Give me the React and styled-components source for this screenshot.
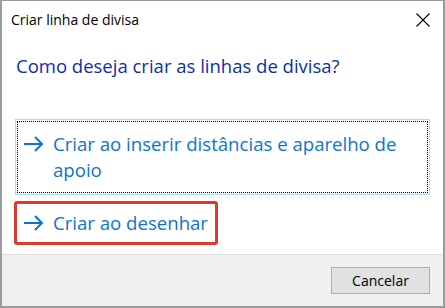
import React from "react";
import styled, { createGlobalStyle } from "styled-components";

const Global = createGlobalStyle`
  html, body { margin: 0; padding: 0; background: #fff; }
  * { box-sizing: border-box; }
`;

const FONT = `"Open Sans", "Noto Sans", "Liberation Sans", sans-serif`;

const Window = styled.div`
  width: 445px;
  height: 308px;
  border: 2px solid #9b9b9b;
  border-top-width: 1px;
  background: #fff;
  display: flex;
  flex-direction: column;
  font-family: ${FONT};
`;

const TitleBar = styled.div`
  height: 38px;
  flex: none;
  display: flex;
  align-items: center;
  justify-content: space-between;
  padding: 0 13px 0 9px;
`;

const Title = styled.div`
  font-size: 14px;
  color: #000;
  line-height: 20px;
`;

const CloseBtn = styled.div`
  width: 14px;
  height: 14px;
  display: flex;
  align-items: center;
  justify-content: center;
`;

const Body = styled.div`
  flex: 1;
  padding: 16px 13px 0 13px;
  display: flex;
  flex-direction: column;
`;

const Heading = styled.div`
  font-size: 18.5px;
  line-height: 22px;
  color: #0a2fae;
  margin-bottom: 42px;
  padding-left: 1px;
`;

const Links = styled.div`
  display: flex;
  flex-direction: column;
  align-items: flex-start;
  gap: 6px;
`;

const LinkOuter = styled.div`
  align-self: ${(p) => (p.$full ? "stretch" : "flex-start")};
  border: ${(p) => (p.$highlight ? "3px solid #e0392b" : "1px solid #aedaf5")};
  border-radius: ${(p) => (p.$highlight ? "3px" : "0")};
  margin-left: ${(p) => (p.$highlight ? "-1px" : "0")};
  padding: ${(p) => (p.$highlight ? "0" : "1px")};
`;

const LinkInner = styled.div`
  border: 1px ${(p) => (p.$focus ? "dotted #000" : "solid transparent")};
  display: flex;
  align-items: flex-start;
  padding: ${(p) => p.$pad};
  gap: 9px;
  color: #0a74d6;
  font-size: 18.6px;
  line-height: 26px;
`;

const ArrowWrap = styled.div`
  height: 26px;
  display: flex;
  align-items: center;
  flex: none;
`;

const LinkText = styled.div`
  flex: 1;
  padding-right: ${(p) => p.$endPad || "0"};
`;

const Footer = styled.div`
  height: 52px;
  flex: none;
  border-top: 1px solid #dfdfdf;
  background: #f0f0f0;
  display: flex;
  justify-content: flex-end;
  align-items: flex-start;
  padding: 12px 13px 0 0;
`;

const Button = styled.div`
  width: 99px;
  height: 27px;
  border: 1px solid #adadad;
  background: #e1e1e1;
  display: flex;
  align-items: center;
  justify-content: center;
  font-size: 14px;
  color: #000;
`;

const Arrow = () => (
  <svg width="20" height="16" viewBox="0 0 20 16" fill="none" stroke="#0a74d6" strokeWidth="2">
    <path d="M0 8 H18" />
    <path d="M11 1 L18 8 L11 15" />
  </svg>
);

const CloseIcon = () => (
  <svg width="14" height="14" viewBox="0 0 14 14" stroke="#000" strokeWidth="1.1">
    <path d="M0.5 0.5 L13.5 13.5 M13.5 0.5 L0.5 13.5" />
  </svg>
);

export default function App() {
  return (
    <>
      <Global />
      <Window>
        <TitleBar>
          <Title>Criar linha de divisa</Title>
          <CloseBtn>
            <CloseIcon />
          </CloseBtn>
        </TitleBar>
        <Body>
          <Heading>Como deseja criar as linhas de divisa?</Heading>
          <Links>
            <LinkOuter $full>
              <LinkInner $focus $pad="9px 6px 9px 6px">
                <ArrowWrap>
                  <Arrow />
                </ArrowWrap>
                <LinkText $endPad="20px">Criar ao inserir distâncias e aparelho de apoio</LinkText>
              </LinkInner>
            </LinkOuter>
            <LinkOuter $highlight>
              <LinkInner $pad="5px 6px 5px 6px">
                <ArrowWrap>
                  <Arrow />
                </ArrowWrap>
                <LinkText>Criar ao desenhar</LinkText>
              </LinkInner>
            </LinkOuter>
          </Links>
        </Body>
        <Footer>
          <Button>Cancelar</Button>
        </Footer>
      </Window>
    </>
  );
}
